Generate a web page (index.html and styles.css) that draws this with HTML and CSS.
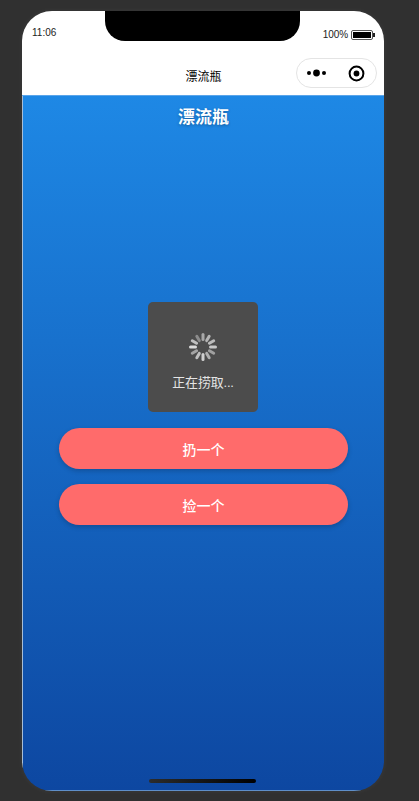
FILE: index.html
```html
<!DOCTYPE html>
<html lang="zh">
<head>
<meta charset="utf-8">
<title>漂流瓶</title>
<link rel="stylesheet" href="styles.css">
</head>
<body>
<div class="phone">
  <div class="notch"></div>
  <header class="chrome">
    <div class="status">
      <span class="time">11:06</span>
      <div class="battery-group">
        <span class="pct">100%</span>
        <span class="battery"><span class="battery-fill"></span></span>
        <span class="battery-tip"></span>
      </div>
    </div>
    <div class="nav">
      <span class="nav-title">漂流瓶</span>
      <div class="capsule">
        <svg class="more" width="21" height="8" viewBox="0 0 21 8"><circle cx="3" cy="4" r="2" fill="#000"/><circle cx="10.5" cy="4" r="3.4" fill="#000"/><circle cx="18" cy="4" r="2" fill="#000"/></svg>
        <svg class="target" width="17" height="17" viewBox="0 0 17 17"><circle cx="8.5" cy="8.5" r="6.9" fill="none" stroke="#000" stroke-width="2"/><circle cx="8.5" cy="8.5" r="2.9" fill="#000"/></svg>
      </div>
    </div>
  </header>
  <main class="page">
    <h1 class="title">漂流瓶</h1>
    <div class="actions">
      <button class="btn">扔一个</button>
      <button class="btn">捡一个</button>
    </div>
    <div class="toast">
      <svg class="spinner" width="30" height="30" viewBox="0 0 30 30">
        <g stroke-width="3" stroke-linecap="round" fill="none">
          <line x1="15" y1="2.5" x2="15" y2="7.5" stroke="#a8a8a8"/>
          <line x1="21.2" y1="4.3" x2="18.7" y2="8.6" stroke="#b4b4b4"/>
          <line x1="25.7" y1="8.8" x2="21.4" y2="11.3" stroke="#bcbcbc"/>
          <line x1="27.5" y1="15" x2="22.5" y2="15" stroke="#c8c8c8"/>
          <line x1="25.7" y1="21.2" x2="21.4" y2="18.7" stroke="#a0a0a0"/>
          <line x1="21.2" y1="25.7" x2="18.7" y2="21.4" stroke="#b0b0b0"/>
          <line x1="15" y1="27.5" x2="15" y2="22.5" stroke="#d0d0d0"/>
          <line x1="8.8" y1="25.7" x2="11.3" y2="21.4" stroke="#c0c0c0"/>
          <line x1="4.3" y1="21.2" x2="8.6" y2="18.7" stroke="#a4a4a4"/>
          <line x1="2.5" y1="15" x2="7.5" y2="15" stroke="#dcdcdc"/>
          <line x1="4.3" y1="8.8" x2="8.6" y2="11.3" stroke="#c0c0c0"/>
          <line x1="8.8" y1="4.3" x2="11.3" y2="8.6" stroke="#8c8c8c"/>
        </g>
      </svg>
      <span class="toast-text">正在捞取...</span>
    </div>
    <div class="home-bar"></div>
  </main>
</div>
</body>
</html>
```
FILE: styles.css
```css
* { box-sizing: border-box; }
html, body { margin: 0; height: 100%; }
body {
  background: #303030;
  font-family: "Liberation Sans", "Noto Sans CJK SC", sans-serif;
  overflow: hidden;
  padding: 11px 0 0 22px;
}
.phone {
  position: relative;
  width: 362px;
  height: 780px;
  border-radius: 30px;
  overflow: hidden;
  display: flex;
  flex-direction: column;
  box-shadow: 0 0 6px rgba(255, 255, 255, 0.05);
}
.notch {
  position: absolute;
  top: 0;
  left: 83px;
  width: 195px;
  height: 30px;
  background: #000;
  border-radius: 0 0 20px 20px;
}
.chrome {
  background: #fff;
  height: 85px;
  flex: none;
  border-bottom: 1px solid #5aa5ea;
}
.status {
  height: 36px;
  padding: 16px 9px 0 10px;
  display: flex;
  justify-content: space-between;
  align-items: flex-start;
  color: #222;
  font-size: 10px;
  line-height: 12px;
}
.battery-group {
  display: flex;
  align-items: center;
  margin-top: 2px;
}
.pct { margin-right: 3px; letter-spacing: -0.1px; }
.battery {
  width: 22px;
  height: 10px;
  border: 1px solid #555;
  border-radius: 2px;
  padding: 1px;
  display: block;
}
.battery-fill { display: block; height: 100%; background: #000; }
.battery-tip { width: 2px; height: 4px; background: #222; }
.nav {
  position: relative;
  height: 48px;
  display: flex;
  justify-content: center;
  align-items: center;
}
.nav-title {
  font-size: 12px;
  color: #000;
  margin-top: 8px;
  margin-left: 1px;
}
.capsule {
  position: absolute;
  top: 11px;
  right: 7px;
  width: 81px;
  height: 30px;
  border: 1px solid #e4e4e4;
  border-radius: 15px;
  background: #fff;
  display: flex;
  align-items: center;
  justify-content: space-between;
  padding: 0 11px 0 9px;
}
.page {
  position: relative;
  flex: 1;
  background: linear-gradient(180deg, #1e88e5 0%, #0d47a1 100%);
  display: flex;
  flex-direction: column;
  align-items: center;
  border-left: 1px solid #a8bed6;
  border-bottom: 1px solid #5f8fc9;
}
.title {
  margin: 10px 0 0;
  font-size: 17px;
  line-height: 24px;
  font-weight: 700;
  color: #fff;
  text-shadow: 0 1px 3px rgba(0, 0, 0, 0.3);
}
.actions {
  margin-top: 298px;
  width: 289px;
  display: flex;
  flex-direction: column;
  gap: 15px;
}
.btn {
  height: 41px;
  border: 0;
  border-radius: 21px;
  background: #ff6b6b;
  color: #fff;
  font-family: inherit;
  font-size: 14px;
  font-weight: 500;
  box-shadow: 0 2px 5px rgba(0, 0, 0, 0.2);
  padding: 0;
}
.toast {
  position: absolute;
  top: 206px;
  left: 125px;
  width: 110px;
  height: 110px;
  background: #4c4c4c;
  border-radius: 5px;
  display: flex;
  flex-direction: column;
  align-items: center;
  color: #e4e4e4;
}
.spinner { margin-top: 30px; }
.toast-text {
  margin-top: 12px;
  font-size: 13px;
  line-height: 18px;
  letter-spacing: -0.2px;
}
.home-bar {
  position: absolute;
  bottom: 7px;
  left: 126px;
  width: 107px;
  height: 4px;
  border-radius: 2px;
  background: linear-gradient(90deg, #2c2c2c, #000);
}
```
